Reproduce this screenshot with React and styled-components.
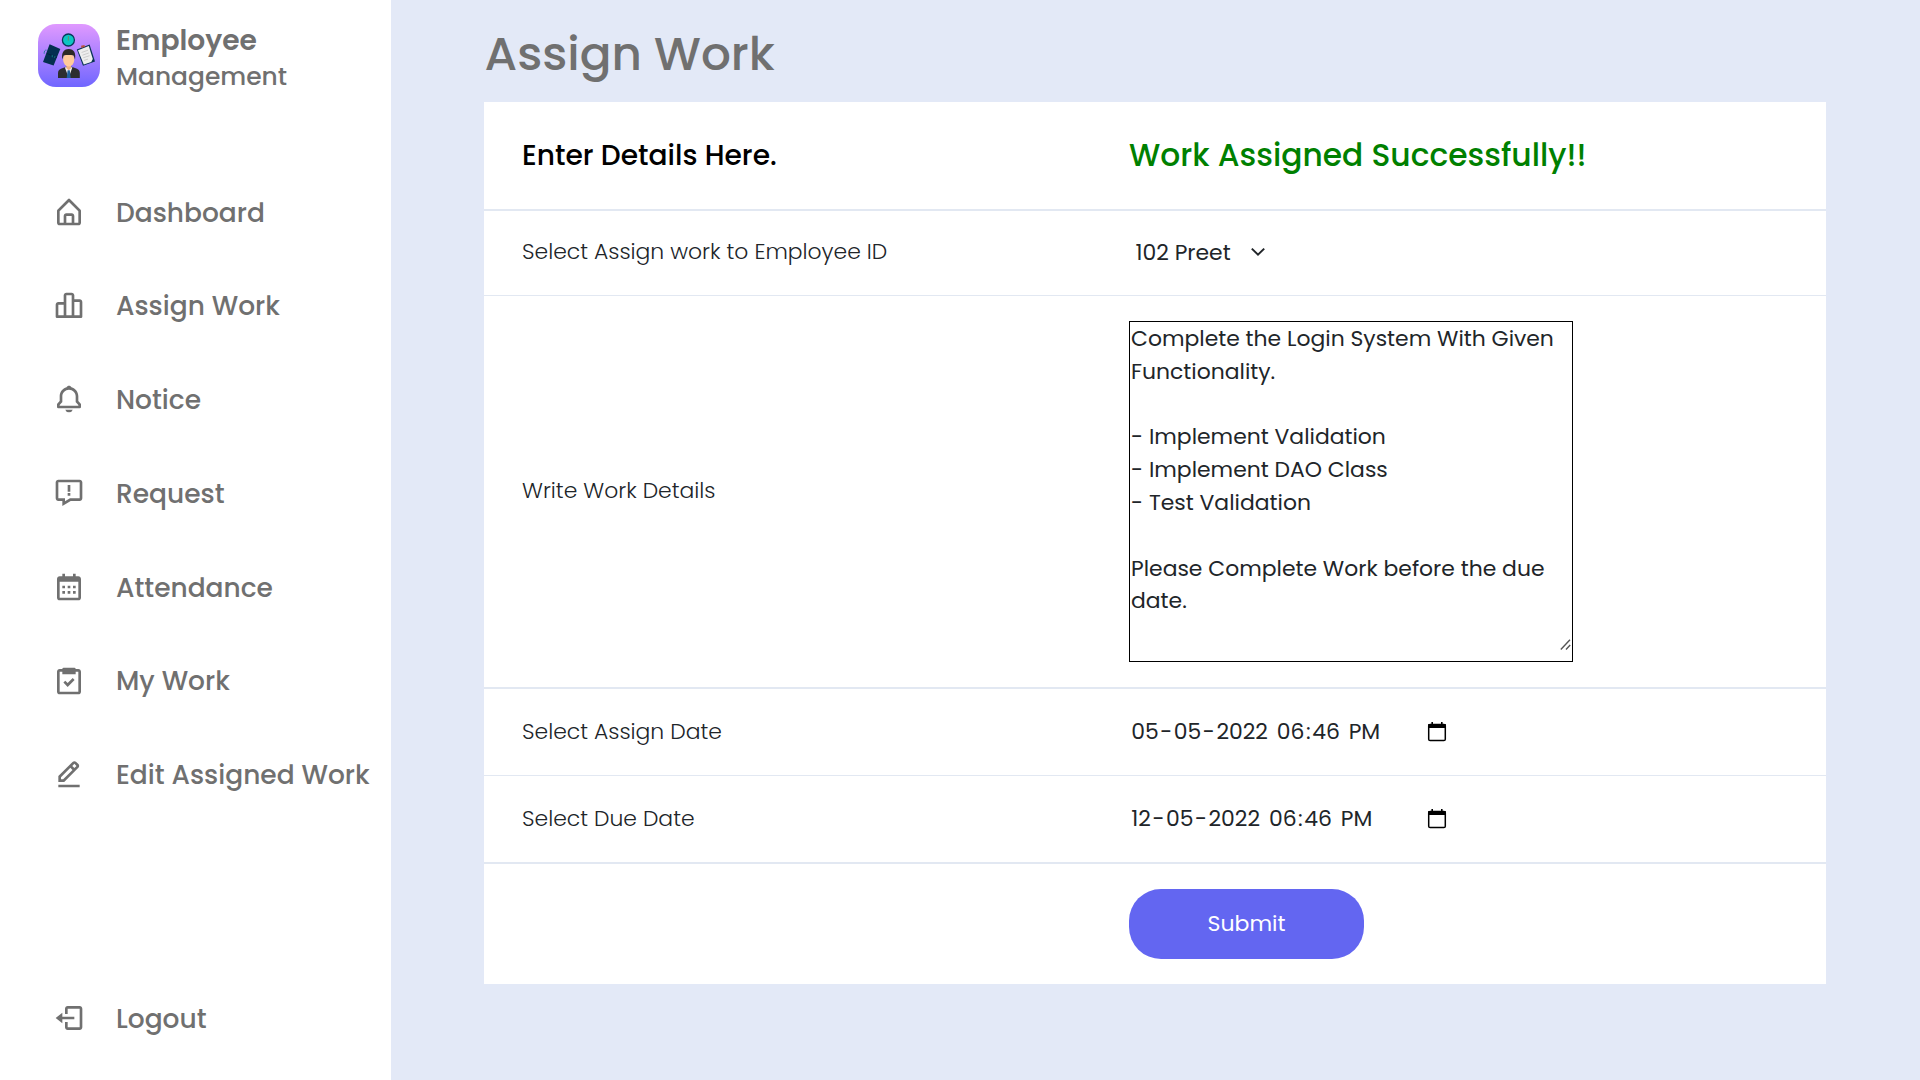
import React from "react";
import styled, { createGlobalStyle } from "styled-components";
import { BiBell, BiMessageError, BiCalendar, BiTask, BiEditAlt, BiLogOut } from "react-icons/bi";

const GlobalStyle = createGlobalStyle`
  * { box-sizing: border-box; margin: 0; padding: 0; }
  body { background: #e3e9f7; font-family: "Poppins", "Inter", sans-serif; }
`;

const Page = styled.div`
  display: flex;
  width: 1920px;
  height: 1080px;
  overflow: hidden;
  background: #e3e9f7;
`;

const Sidebar = styled.aside`
  display: flex;
  flex-direction: column;
  width: 391px;
  padding: 21px 0 15px;
  background: #fff;
  color: #707070;
`;

const Brand = styled.header`
  display: flex;
  align-items: flex-start;
  gap: 16px;
  height: 144px;
  padding-left: 38px;
`;

const Logo = styled.svg`
  width: 62px;
  height: 63px;
  margin-top: 3px;
`;

const BrandText = styled.div`
  display: flex;
  flex-direction: column;
`;

const BrandName = styled.span`
  font-size: 28.1px;
  line-height: 38px;
  font-weight: 600;
`;

const BrandSub = styled.span`
  font-size: 24.95px;
  line-height: 36px;
  font-weight: 500;
`;

const Menu = styled.ul`
  display: flex;
  flex-direction: column;
  list-style: none;
`;

const MenuItem = styled.li`
  display: flex;
  align-items: center;
  height: 93.75px;
  padding-left: 53px;
  font-size: 26.48px;
  font-weight: 500;
  white-space: nowrap;

  svg {
    flex: none;
    width: 32px;
    height: 32px;
    margin-right: 31px;
  }
`;

const MenuText = styled.span`
  padding-top: 1.6px;
`;

const Bottom = styled.div`
  margin-top: auto;
`;

const Main = styled.main`
  flex: 1;
  padding: 19px 94px 0 93px;
`;

const Title = styled.h1`
  height: 83px;
  padding-left: 0.5px;
  font-size: 46.9px;
  line-height: 70px;
  font-weight: 500;
  color: #707070;
`;

const Card = styled.form`
  display: flex;
  flex-direction: column;
  width: 1342px;
  background: #fff;
  color: #212529;
`;

const Row = styled.div`
  display: grid;
  grid-template-columns: 607px 1fr;
  align-items: center;
  height: ${(p) => p.$height}px;
  padding: 0 0 ${(p) => p.$lift || 0}px 38px;
  border-bottom: ${(p) => p.$line || 0}px solid #e2e8f2;
  font-size: 21.9px;
  line-height: 33px;
`;

const Heading = styled.h2`
  font-size: 28.1px;
  line-height: 42px;
  font-weight: 500;
  color: #000;
`;

const Success = styled.p`
  font-size: 31.3px;
  line-height: 46px;
  font-weight: 500;
  color: #008000;
`;

const Label = styled.label`
  padding-bottom: 2px;
  font-weight: 300;
`;

const Picker = styled.div`
  display: flex;
  align-items: center;
  gap: 19.5px;
  padding-left: 6.5px;
`;

const Chevron = styled.svg`
  width: 16px;
  height: 10px;
`;

const AreaBox = styled.div`
  position: relative;
  display: flex;
  width: 444px;
  height: 341px;
`;

const Area = styled.textarea`
  width: 100%;
  height: 100%;
  padding: 1px;
  border: 1px solid #000;
  outline: none;
  resize: none;
  overflow: hidden;
  background: #fff;
  color: #212529;
  font: 400 21.9px/32.8px "Poppins", "Inter", sans-serif;
`;

const Grip = styled.svg`
  position: absolute;
  right: 2px;
  bottom: 12px;
  width: 11px;
  height: 11px;
`;

const DateBox = styled.div`
  display: flex;
  align-items: center;
  justify-content: space-between;
  width: 318px;
`;

const DateValue = styled.span`
  padding: 0 0 2px 0.8px;
  white-space: pre;
`;

const Field = styled.span`
  padding: 0 1.5px;
`;

const CalendarIcon = styled.svg`
  width: 20px;
  height: 20px;
`;

const Submit = styled.button`
  width: 235px;
  height: 70px;
  padding-bottom: 2px;
  border: 0;
  border-radius: 32px;
  background: #6366f1;
  color: #fff;
  font: 400 22px/33px "Poppins", "Inter", sans-serif;
`;

const HomeIcon = () => (
  <svg viewBox="0 0 24 24" fill="currentColor">
    <path d="M5 22h14c1.103 0 2-.897 2-2v-9a1 1 0 0 0-.293-.707l-8-8a.999.999 0 0 0-1.414 0l-8 8A1 1 0 0 0 3 11v9c0 1.103.897 2 2 2zm5-2v-5h4v5h-4zm-5-8.586 7-7 7 7V20h-3v-5c0-1.103-.897-2-2-2h-4c-1.103 0-2 .897-2 2v5H5v-8.586z" />
  </svg>
);

const ChartIcon = () => (
  <svg viewBox="0 0 24 24" fill="currentColor">
    <path d="M20 7h-4V4c0-1.103-.897-2-2-2h-4c-1.103 0-2 .897-2 2v5H4c-1.103 0-2 .897-2 2v9a1 1 0 0 0 1 1h18a1 1 0 0 0 1-1V9c0-1.103-.897-2-2-2zM4 11h4v8H4v-8zm6-1V4h4v15h-4v-9zm10 9h-4V9h4v10z" />
  </svg>
);

const BrandLogo = () => (
  <Logo viewBox="0 0 62 63">
    <defs>
      <linearGradient id="tile" x1="0" y1="0" x2="0" y2="1">
        <stop offset="0" stopColor="#e099ff" />
        <stop offset="1" stopColor="#7066ff" />
      </linearGradient>
    </defs>
    <rect width="62" height="63" rx="18" fill="url(#tile)" />
    <circle cx="30.4" cy="16" r="6" fill="#0ec5c3" stroke="#063a5c" strokeWidth="1.3" />
    <path d="M30.4 12v4.6" stroke="#6b8f62" strokeWidth="0.9" />
    <path d="M8.6 26.2c-1.6-.4-2.6 1-2.4 3.6" fill="none" stroke="#14768c" strokeWidth="0.8" />
    <path d="M11.6 20.3 22.3 25 15.6 41.4 5 38z" fill="#042f50" />
    <path d="m9 29.5 9.8 4" stroke="#03223d" strokeWidth="1" />
    <path d="m14.2 31 .1 2.2M17 32l-.4 1.8" stroke="#128a92" strokeWidth="0.8" />
    <path d="M38.8 25.4 51.6 20.4 57 37.4 45 41.8z" fill="#083355" />
    <path d="m40 26.2 10.8-4.1 4 12.8-1.6 3.2-7.4 2.4z" fill="#ededed" />
    <path d="m43 21.8 3.4-.9.7 1.8-3.6 1.2z" fill="#b6543c" />
    <path d="m43.6 28.5 6.4-2.3M44.4 31.2l6.4-2.2M45.2 33.8l6.4-2.1M46 36.4l4-1.3" stroke="#bdbdbd" strokeWidth="0.7" />
    <path d="M20 54v-5c0-3 2-4 5-5l3-1.2h5.6L37 44c3 1 4.8 2 4.8 5v5z" fill="#2d2d2f" />
    <path d="m26.8 43.2 3.9 10.6 3.7-10.6z" fill="#f3f1f0" />
    <path d="M29.6 46.2h2.2l.9 7.8h-4z" fill="#20609b" />
    <path d="M28.4 40h4.6v4.2l-2.3 2-2.3-2z" fill="#efb182" />
    <ellipse cx="30.7" cy="35.6" rx="5.6" ry="7" fill="#ffca9a" />
    <path d="M24.3 35.4c-1-6 1-10.4 6.4-10.4s7.4 4.2 6.3 10.4l-1.3-3.9c-3.2-.6-7.2-.6-10.1 0z" fill="#2d2926" />
  </Logo>
);

const menu = [
  ["Dashboard", HomeIcon],
  ["Assign Work", ChartIcon],
  ["Notice", BiBell],
  ["Request", BiMessageError],
  ["Attendance", BiCalendar],
  ["My Work", BiTask],
  ["Edit Assigned Work", BiEditAlt],
];

const details = `Complete the Login System With Given Functionality.

- Implement Validation
- Implement DAO Class
- Test Validation

Please Complete Work before the due date.`;

const DateTime = ({ day, month, year, hour, minute, half }) => (
  <DateBox>
    <DateValue>
      <Field>{day}</Field>-<Field>{month}</Field>-<Field>{year}</Field> <Field>{hour}</Field>:
      <Field>{minute}</Field> <Field>{half}</Field>
    </DateValue>
    <CalendarIcon viewBox="0 0 20 20">
      <path d="M5.2 0v3M14.8 0v3" stroke="#000" strokeWidth="1.6" />
      <rect x="1.7" y="2.4" width="16.6" height="16.2" rx="1.4" fill="none" stroke="#000" strokeWidth="1.5" />
      <path d="M1.2 2h17.6v4H1.2z" fill="#000" />
    </CalendarIcon>
  </DateBox>
);

export default function App() {
  return (
    <Page>
      <GlobalStyle />
      <Sidebar>
        <Brand>
          <BrandLogo />
          <BrandText>
            <BrandName>Employee</BrandName>
            <BrandSub>Management</BrandSub>
          </BrandText>
        </Brand>
        <Menu>
          {menu.map(([name, Icon]) => (
            <MenuItem key={name}>
              <Icon />
              <MenuText>{name}</MenuText>
            </MenuItem>
          ))}
        </Menu>
        <Bottom>
          <MenuItem as="div">
            <BiLogOut />
            <MenuText>Logout</MenuText>
          </MenuItem>
        </Bottom>
      </Sidebar>
      <Main>
        <Title>Assign Work</Title>
        <Card>
          <Row $height={109} $line={2} $lift={2}>
            <Heading>Enter Details Here.</Heading>
            <Success>Work Assigned Successfully!!</Success>
          </Row>
          <Row $height={85} $line={1} $lift={2}>
            <Label>Select Assign work to Employee ID</Label>
            <Picker>
              102 Preet
              <Chevron viewBox="0 0 16 10">
                <path d="m1.8 1.6 6.2 6 6.2-6" fill="none" stroke="#212529" strokeWidth="2" />
              </Chevron>
            </Picker>
          </Row>
          <Row $height={393} $line={2}>
            <Label>Write Work Details</Label>
            <AreaBox>
              <Area defaultValue={details} spellCheck={false} />
              <Grip viewBox="0 0 11 11">
                <path d="M0.8 10.4 10 0.8M6 10.4l4.2-4.4" fill="none" stroke="#555" strokeWidth="1.4" />
              </Grip>
            </AreaBox>
          </Row>
          <Row $height={87} $line={1}>
            <Label>Select Assign Date</Label>
            <DateTime day="05" month="05" year="2022" hour="06" minute="46" half="PM" />
          </Row>
          <Row $height={88} $line={2}>
            <Label>Select Due Date</Label>
            <DateTime day="12" month="05" year="2022" hour="06" minute="46" half="PM" />
          </Row>
          <Row $height={120}>
            <span />
            <Submit type="button">Submit</Submit>
          </Row>
        </Card>
      </Main>
    </Page>
  );
}
